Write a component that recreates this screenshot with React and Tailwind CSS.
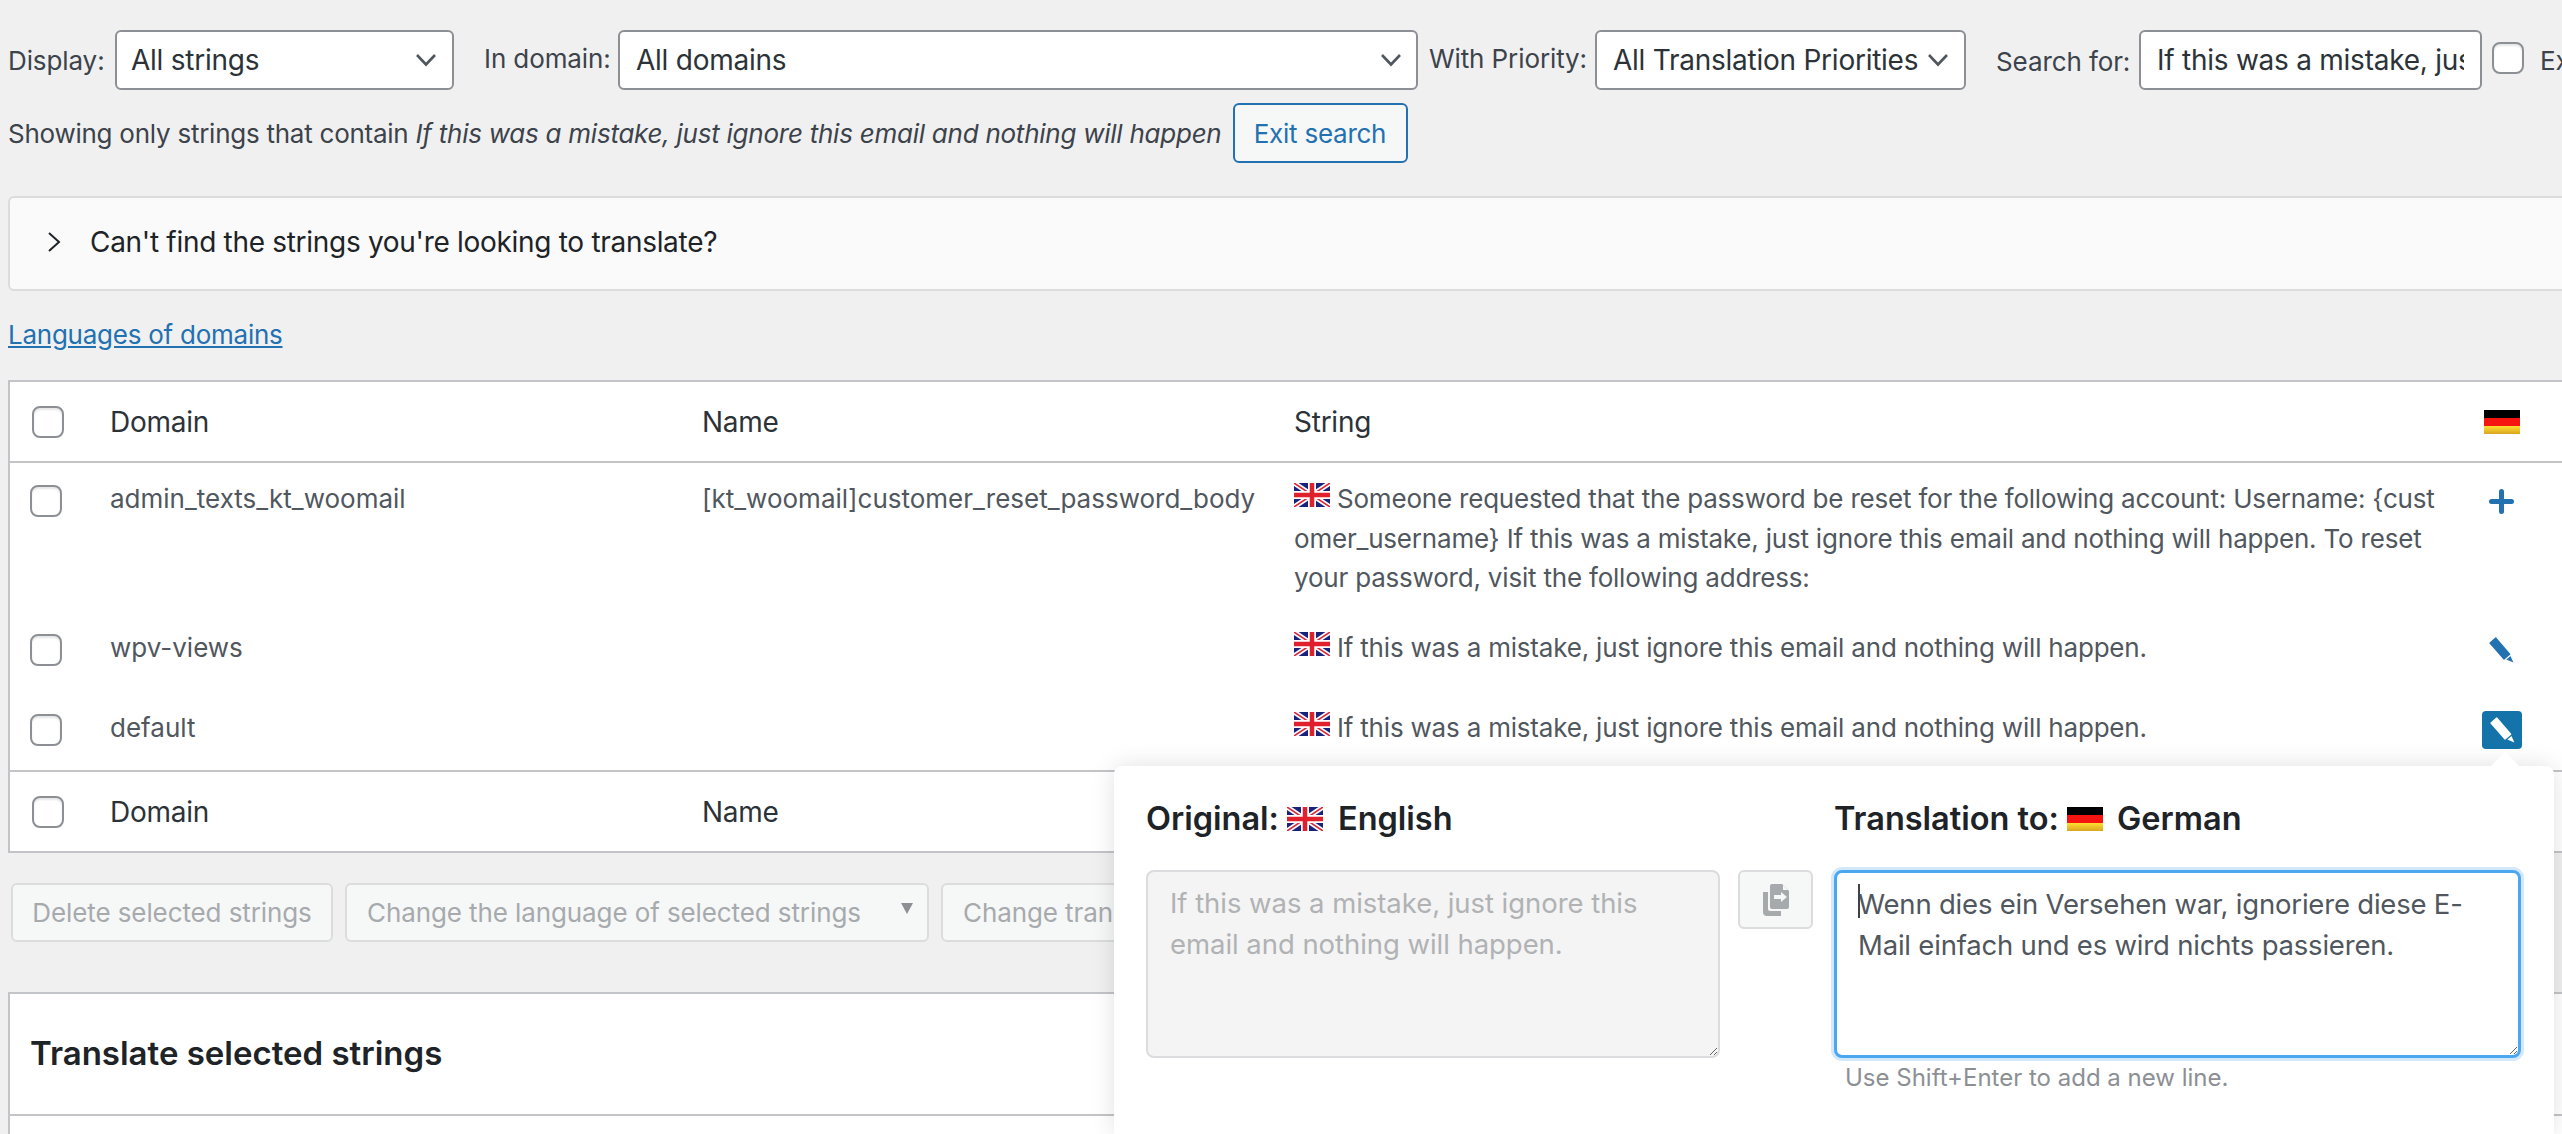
import React from 'react';

const FONT = 'font-["Inter","Liberation_Sans",sans-serif]';

const UkFlag = () => (
    <svg width="36" height="24" viewBox="0 0 36 24" className="shrink-0 blur-[0.4px]">
        <rect width="36" height="24" fill="#1a237b" />
        <path d="M0 0L36 24M36 0L0 24" stroke="#fff" strokeWidth="5" />
        <path d="M0 0L36 24M36 0L0 24" stroke="#d8283c" strokeWidth="1.6" />
        <path d="M18 0V24M0 12H36" stroke="#fff" strokeWidth="8" />
        <path d="M18 0V24M0 12H36" stroke="#e0202c" strokeWidth="4.5" />
    </svg>
);

const DeFlag = () => (
    <svg width="36" height="24" viewBox="0 0 36 24" className="shrink-0">
        <defs>
            <linearGradient id="de-yellow" x1="0" y1="0" x2="0" y2="1">
                <stop offset="0" stopColor="#ffdf30" />
                <stop offset="1" stopColor="#d9a520" />
            </linearGradient>
        </defs>
        <rect width="36" height="8" fill="#000" />
        <rect y="8" width="36" height="8" fill="#f5140f" />
        <rect y="16" width="36" height="8" fill="url(#de-yellow)" />
    </svg>
);

const Chevron = ({ className = '' }) => (
    <svg width="22" height="14" viewBox="0 0 22 14" className={className} fill="none" stroke="#50575e" strokeWidth="2.6">
        <path d="M2 2L11 11.5L20 2" />
    </svg>
);

const Pencil = ({ color = '#2271b1' }) => (
    <svg width="25" height="26" viewBox="0 0 25 26">
        <path d="M6.7 1L1 6L15 22L20.7 17.2Z" fill={color} stroke={color} strokeWidth="1.2" strokeLinejoin="round" />
        <path d="M17.3 22.5L21.5 19L24.4 25.6Z" fill={color} />
    </svg>
);

const CopyIcon = () => (
    <svg width="28" height="32" viewBox="0 0 28 32">
        <path d="M10 0H20L27 7V23a2 2 0 0 1-2 2H10a2 2 0 0 1-2-2V2a2 2 0 0 1 2-2Z" fill="#a7aaad" />
        <path d="M21 1L26 6H21Z" fill="#f6f7f7" />
        <path d="M1 8V28a4 4 0 0 0 4 4H19v-5H8a2 2 0 0 1-2-2V8Z" fill="#a7aaad" />
        <path d="M12 11H19V8L25 13L19 18V15H12Z" fill="#f6f7f7" />
    </svg>
);

const Checkbox = ({ className = '' }) => (
    <span className={`block w-[32px] h-[32px] rounded-[8px] border-2 border-[#8c8f94] bg-white shadow-[inset_0_2px_2px_rgba(0,0,0,0.1)] ${className}`} />
);

const SelectBox = ({ label, className = '' }) => (
    <div className={`h-[60px] flex items-center justify-between rounded-[6px] border-2 border-[#8c8f94] bg-white text-[#2c3338] text-[28px] tracking-[-0.25px] ${className}`}>
        <span className="whitespace-nowrap">{label}</span>
        <Chevron />
    </div>
);

const rows = [
    {
        domain: 'admin_texts_kt_woomail',
        name: '[kt_woomail]customer_reset_password_body',
        rowClass: 'h-[149px]',
        text: (
            <>
                Someone requested that the password be reset for the following account: Username: {'{cust'}
                <br />
                {'omer_username}'} If this was a mistake, just ignore this email and nothing will happen. To reset
                <br />
                your password, visit the following address:
            </>
        ),
        icon: <span className="block w-[25px] h-[25px] relative mt-[10px] ml-[5px]"><span className="block absolute left-0 right-0 top-[10px] h-[5px] rounded bg-[#2271b1]" /><span className="block absolute top-0 bottom-0 left-[10px] w-[5px] rounded bg-[#2271b1]" /></span>,
    },
    {
        domain: 'wpv-views',
        name: '',
        rowClass: 'h-[80px]',
        text: 'If this was a mistake, just ignore this email and nothing will happen.',
        icon: <span className="block mt-[9px] ml-[5px]"><Pencil /></span>,
    },
    {
        domain: 'default',
        name: '',
        rowClass: 'h-[78px]',
        text: 'If this was a mistake, just ignore this email and nothing will happen.',
        icon: (
            <span className="flex items-center justify-center w-[40px] h-[38px] rounded-[4px] bg-[#1474aa] mt-[3px] -ml-[2px]">
                <Pencil color="#fff" />
            </span>
        ),
    },
];

const TABLE_COLS = 'grid grid-cols-[100px_592px_592px_1190px_100px]';

const HeaderRow = ({ flag, className = '' }) => (
    <div className={`${TABLE_COLS} items-center h-[81px] text-[#2c3338] text-[28px] tracking-[-0.25px] ${className}`}>
        <Checkbox className="ml-[22px]" />
        <span>Domain</span>
        <span>Name</span>
        <span>String</span>
        {flag ? <DeFlag /> : <span />}
    </div>
);

const TranslationPopup = () => (
    <div className="absolute left-[1114px] top-[766px] w-[1440px] h-[368px] bg-white rounded-t-[8px] shadow-[0_0_24px_rgba(0,0,0,0.12)] pt-[33px] px-[32px]">
        {/* flechita hacia el botón de edición */}
        <span className="absolute right-[29px] -top-[6px] w-[40px] h-[40px] rotate-45 bg-white" />
        <div className="relative flex">
            <div className="w-[574px]">
                <h3 className="h-[40px] flex items-center gap-[8px] text-[32.5px] font-semibold text-[#1d2327] whitespace-nowrap">
                    Original: <span className="flex w-[36px] mr-[7px]"><UkFlag /></span> English
                </h3>
                <textarea
                    readOnly
                    className="block w-[574px] h-[188px] mt-[31px] rounded-[8px] border-2 border-[#dcdcde] bg-[#f4f4f4] px-[22px] py-[11px] text-[27.5px] tracking-[-0.05px] leading-[41px] text-[#b0b2b4] outline-none"
                    value="If this was a mistake, just ignore this email and nothing will happen."
                />
            </div>
            <div className="w-[114px] pl-[18px] pt-[71px]">
                <span className="flex items-center justify-center w-[75px] h-[59px] rounded-[6px] border-2 border-[#dcdcde] bg-[#f6f7f7]">
                    <CopyIcon />
                </span>
            </div>
            <div className="w-[687px]">
                <h3 className="h-[40px] flex items-center gap-[8px] text-[32.5px] font-semibold text-[#1d2327] whitespace-nowrap">
                    Translation to: <span className="flex w-[36px] mr-[6px]"><DeFlag /></span> German
                </h3>
                <div className="relative mt-[31px]">
                    <textarea
                        readOnly
                        className="block w-[687px] h-[188px] rounded-[8px] border-[3px] border-[#4ba8f0] shadow-[0_0_0_3px_#d3e9fb] bg-white px-[21px] py-[11px] text-[27.5px] tracking-[-0.2px] leading-[41px] text-[#50575e] outline-none"
                        value="Wenn dies ein Versehen war, ignoriere diese E-Mail einfach und es wird nichts passieren."
                    />
                    {/* cursor de texto */}
                    <span className="absolute left-[24px] top-[14px] w-[2px] h-[34px] bg-[#3c434a]" />
                </div>
                <p className="mt-[2px] ml-[11px] text-[24px] text-[#8c8f94] whitespace-nowrap">Use Shift+Enter to add a new line.</p>
            </div>
        </div>
    </div>
);

export default function App() {
    return (
        <div className={`relative w-full h-[1134px] overflow-hidden bg-[#f0f0f1] ${FONT} text-[#3c434a] text-[26px]`}>
            <div className="w-[2700px] pl-[8px]">
                {/* Filtros */}
                <div className="flex items-start pt-[30px] whitespace-nowrap tracking-[-0.1px]">
                    <span className="w-[107px] h-[60px] flex items-center">Display:</span>
                    <SelectBox label="All strings" className="w-[339px] pl-[14px] pr-[15px]" />
                    <span className="ml-[30px] w-[134px] h-[56px] flex items-center">In domain:</span>
                    <SelectBox label="All domains" className="w-[800px] pl-[16px] pr-[14px]" />
                    <span className="ml-[11px] w-[166px] h-[56px] flex items-center">With Priority:</span>
                    <SelectBox label="All Translation Priorities" className="w-[371px] pl-[16px] pr-[15px]" />
                    <span className="ml-[30px] w-[143px] h-[62px] flex items-center">Search for:</span>
                    <input
                        readOnly
                        value="If this was a mistake, just ignore this email and nothing will happen"
                        className="w-[343px] h-[60px] rounded-[6px] border-2 border-[#8c8f94] bg-white pl-[16px] pr-[16px] text-[28px] tracking-[-0.25px] text-[#2c3338] outline-none"
                    />
                    <Checkbox className="ml-[10px] mt-[12px]" />
                    <span className="ml-[16px] h-[60px] flex items-center">Exact match</span>
                </div>

                <div className="flex items-center h-[60px] mt-[11px] whitespace-nowrap tracking-[-0.25px]">
                    <span>Showing only strings that contain <em>If this was a mistake, just ignore this email and nothing will happen</em></span>
                    <span className="ml-[11px] h-[60px] w-[175px] flex items-center justify-center rounded-[6px] border-2 border-[#2271b1] bg-[#f6f7f7] text-[#2271b1]">Exit search</span>
                </div>

                {/* Acordeón */}
                <div className="h-[95px] mt-[33px] pb-[3px] flex items-center rounded-l-[6px] border-2 border-[#dcdcde] bg-[#fafafa] text-[#1d2327] text-[28px] tracking-[-0.3px]">
                    <svg width="16" height="24" viewBox="0 0 16 24" className="ml-[36px] mr-[28px]" fill="none" stroke="#1d2327" strokeWidth="2">
                        <path d="M3 3L13 12L3 21" />
                    </svg>
                    Can't find the strings you're looking to translate?
                </div>

                <a className="block mt-[28px] h-[32px] leading-[32px] tracking-[-0.25px] text-[#2271b1] underline">Languages of domains</a>

                {/* Tabla de cadenas */}
                <div className="mt-[29px] border-2 border-[#c3c4c7] bg-white">
                    <HeaderRow flag className="border-b-2 border-[#c3c4c7]" />
                    {rows.map((row) => (
                        <div key={row.domain} className={`${TABLE_COLS} ${row.rowClass} pt-[16px] leading-[39.5px] text-[#50575e]`}>
                            <Checkbox className="ml-[20px] mt-[6px]" />
                            <span>{row.domain}</span>
                            <span>{row.name}</span>
                            <span className="whitespace-nowrap tracking-[-0.2px]">
                                <span className="inline-block align-[1px] mr-[7px]"><UkFlag /></span>
                                {row.text}
                            </span>
                            <span>{row.icon}</span>
                        </div>
                    ))}
                    <HeaderRow className="border-t-2 border-[#c3c4c7]" />
                </div>

                {/* Acciones masivas */}
                <div className="flex gap-[12px] mt-[30px] ml-[3px] text-[#a7aaad] whitespace-nowrap tracking-[-0.1px]">
                    <span className="w-[322px] h-[59px] flex items-center justify-center rounded-[6px] border-2 border-[#dcdcde] bg-[#f6f7f7]">Delete selected strings</span>
                    <span className="w-[584px] h-[59px] flex items-center justify-between pl-[20px] pr-[14px] rounded-[6px] border-2 border-[#dcdcde] bg-[#f6f7f7]">
                        Change the language of selected strings
                        <svg width="12" height="12" viewBox="0 0 12 12" className="mb-[8px]"><path d="M0 0H12L6 11Z" fill="#8c8f94" /></svg>
                    </span>
                    <span className="w-[500px] h-[59px] flex items-center pl-[20px] rounded-[6px] border-2 border-[#dcdcde] bg-[#f6f7f7]">Change translation priority of selected strings</span>
                </div>

                {/* Traducir seleccionadas */}
                <div className="mt-[50px] border-2 border-[#c3c4c7] bg-white">
                    <div className="h-[122px] flex items-center pl-[20px] pb-[1px] border-b-2 border-[#c3c4c7] text-[33px] font-semibold text-[#1d2327]">
                        Translate selected strings
                    </div>
                    <div className="h-[40px]" />
                </div>
            </div>

            <TranslationPopup />
        </div>
    );
}
